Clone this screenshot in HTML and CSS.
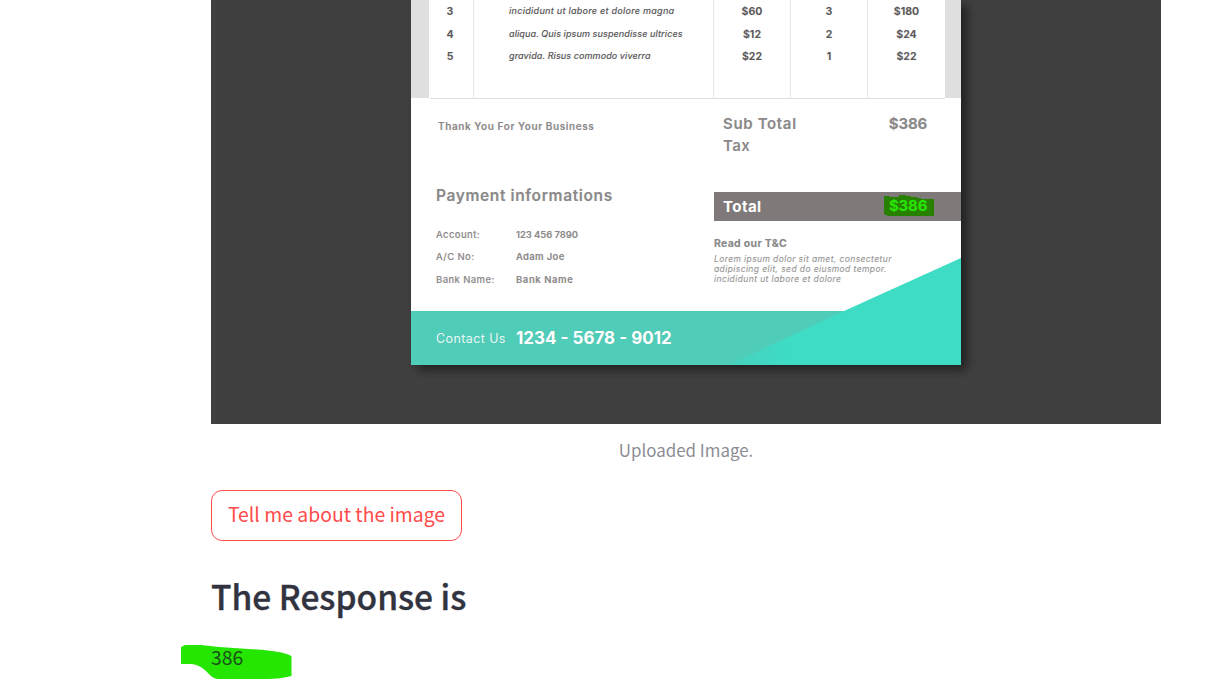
FILE: index.html
```html
<!DOCTYPE html>
<html lang="en">
<head>
<meta charset="utf-8">
<title>Image response</title>
<link rel="stylesheet" href="styles.css">
</head>
<body>
<main class="page">
  <figure class="upload">
    <div class="photo">
      <div class="paper">
        <section class="items">
          <div class="col no"><span>3</span><span>4</span><span>5</span></div>
          <div class="col desc"><span class="d1">incididunt ut labore et dolore magna</span><span class="d2">aliqua. Quis ipsum suspendisse ultrices</span><span class="d3">gravida. Risus commodo viverra</span></div>
          <div class="col"><span>$60</span><span>$12</span><span>$22</span></div>
          <div class="col"><span>3</span><span>2</span><span>1</span></div>
          <div class="col"><span>$180</span><span>$24</span><span>$22</span></div>
        </section>
        <section class="summary">
          <div class="left">
            <p class="thanks">Thank You For Your Business</p>
            <h3 class="pay-title">Payment informations</h3>
            <dl class="pay">
              <dt class="k1">Account:</dt><dd class="v1">123 456 7890</dd>
              <dt class="k2">A/C No:</dt><dd class="v2">Adam Joe</dd>
              <dt class="k3">Bank Name:</dt><dd class="v3">Bank Name</dd>
            </dl>
          </div>
          <div class="right">
            <div class="sub"><span class="subtotal">Sub Total</span><span class="amount">$386</span></div>
            <div class="tax">Tax</div>
            <div class="total">
              <span class="total-label">Total</span>
              <span class="marked"><svg class="mark" width="50" height="21" viewBox="0 0 50 21"><path fill="#278000" d="M0 1h6v1h9V0h7v1h5v1h6v1h4v1h13v17H4l-4-2z"/></svg><span class="amount green">$386</span></span>
            </div>
            <h4 class="terms-title">Read our T&amp;C</h4>
            <p class="terms"><span class="t1">Lorem ipsum dolor sit amet, consectetur</span><span class="t2">adipiscing elit, sed do eiusmod tempor.</span><span class="t3">incididunt ut labore et dolore</span></p>
          </div>
        </section>
        <footer class="contact"><span class="contact-label">Contact Us</span><span class="phone">1234 - 5678 - 9012</span></footer>
        <svg class="corner" width="232" height="107" viewBox="0 0 232 107">
          <defs><linearGradient id="fade" x1="0" x2="1"><stop offset="0" stop-color="#48d1bd"/><stop offset=".25" stop-color="#3edbc5"/></linearGradient></defs>
          <path fill="url(#fade)" d="M0 107 115 53 232 0v107z"/>
        </svg>
      </div>
    </div>
    <figcaption class="caption">Uploaded Image.</figcaption>
  </figure>
  <button class="ask">Tell me about the image</button>
  <h1 class="heading">The Response is</h1>
  <p class="answer"><svg class="highlight" width="112" height="35" viewBox="0 0 112 35"><path fill="#25e600" d="M0 2 4 0H20L38 2 83 5Q104 7 110.500 11V31Q99 34 86 34H38Q32 34 28 29 20 20 11 19H0z"/></svg><span class="answer-text">386</span></p>
</main>
</body>
</html>
```
FILE: styles.css
```css
* { box-sizing: border-box; }
body, p, h1, h3, h4, figure, dl, dd { margin: 0; }
body { background: #fff; font-family: "Noto Sans CJK SC", "Open Sans", sans-serif; overflow: hidden; }
.page { padding: 0 60px 0 211px; height: 687px; }

.photo { height: 424px; background: #404040; padding-left: 200px; overflow: hidden; }
.paper {
  position: relative; width: 550px; height: 365px; background: #fff;
  box-shadow: 6px 5px 10px rgba(0, 0, 0, .5);
  font-family: Inter, sans-serif; color: #8b8989; white-space: nowrap;
}
.paper span, .paper p, .paper h3, .paper h4, .paper dt, .paper dd { text-shadow: 0 0 1px rgba(140, 140, 140, .25); }

.items {
  display: grid; grid-template-columns: 44px 240px 77px 77px 77px;
  height: 99px; padding: 0 16px 0 19px;
  background: linear-gradient(90deg, #dfdfdf 18px, #fff 18px 534px, #dfdfdf 534px) 0 0 / 100% 98px no-repeat;
}
.col {
  display: flex; flex-direction: column; align-items: center;
  padding-top: 1px;
  border-right: 1px solid #e6e6e6; border-bottom: 1px solid #dedede;
  font-size: 10.5px; font-weight: 700; line-height: 22.5px; color: #5d5b5c;
}
.col.no { padding-right: 3px; }
.col.desc { align-items: flex-start; padding: 0 0 0 35px; font-size: 9px; font-weight: 500; font-style: italic; letter-spacing: .08px; }
.col.desc .d1 { letter-spacing: .26px; }
.col:last-child { border-right: 0; }

.summary { display: grid; grid-template-columns: 303px 247px; height: 212px; }
.left { padding: 17px 0 0 25px; }
.thanks { padding-left: 2px; font-size: 10px; font-weight: 600; line-height: 20px; letter-spacing: .59px; }
.pay-title { margin-top: 48px; font-size: 15.5px; font-weight: 600; line-height: 24px; letter-spacing: .62px; }
.pay { display: grid; grid-template-columns: 80px 1fr; grid-auto-rows: 22.3px; margin-top: 16px; font-size: 9.5px; line-height: 22.3px; letter-spacing: .4px; }
.pay dt { font-weight: 500; }
.pay dd { font-weight: 600; }
.pay .v1 { letter-spacing: -.08px; }
.pay .v2 { letter-spacing: .32px; }
.pay .v3 { letter-spacing: .58px; }
.right { padding-top: 14px; }
.sub, .tax { padding: 0 34px 0 9px; font-size: 15px; font-weight: 600; line-height: 22px; letter-spacing: .4px; }
.sub { display: flex; justify-content: space-between; }
.subtotal { letter-spacing: .65px; }
.amount { font-size: 15px; font-weight: 700; letter-spacing: -.2px; }
.total { display: flex; justify-content: space-between; align-items: center; height: 29px; margin: 35px 0 0; padding: 0 27px 3px 9px; background: #7f7979; color: #fff; }
.total-label { padding-top: 2px; font-size: 15px; font-weight: 700; letter-spacing: .45px; }
.marked { position: relative; width: 50px; height: 21px; padding-left: 5px; line-height: 21px; }
.mark { position: absolute; left: 0; top: 0; }
.amount.green { position: relative; color: #25e600; }
.terms-title { margin-top: 14px; font-size: 10.5px; font-weight: 700; line-height: 18px; letter-spacing: .3px; }
.terms { display: flex; flex-direction: column; align-items: flex-start; margin-top: 2px; font-size: 8.5px; font-style: italic; line-height: 9.8px; letter-spacing: .4px; color: #989696; }

.contact { display: flex; align-items: center; height: 54px; padding-left: 25px; background: #50cdb9; color: #fff; }
.contact-label { width: 80px; font-size: 12.5px; letter-spacing: .4px; color: #e6faf6; }
.phone { font-size: 17px; font-weight: 700; }
.corner { position: absolute; right: 0; bottom: 0; }

.caption { margin-top: 11px; text-align: center; font-size: 16.9px; line-height: 30px; color: #8c8d94; font-weight: 400; }
.ask { display: block; width: 251px; height: 51px; margin-top: 25px; padding: 0 0 3px; border: 1px solid #ff4b4b; border-radius: 11px; background: #fff; color: #ff4b4b; font: 400 19.4px/46px "Noto Sans CJK SC", sans-serif; }
.heading { margin-top: 29px; font-size: 33.5px; font-weight: 500; line-height: 52px; color: #31333f; -webkit-text-stroke: .35px #31333f; }
.answer { position: relative; margin-top: 21px; font-size: 19.4px; line-height: 30px; color: #1b4f1a; }
.highlight { position: absolute; left: -30px; top: 2px; }
.answer-text { position: relative; top: -1px; }
```
